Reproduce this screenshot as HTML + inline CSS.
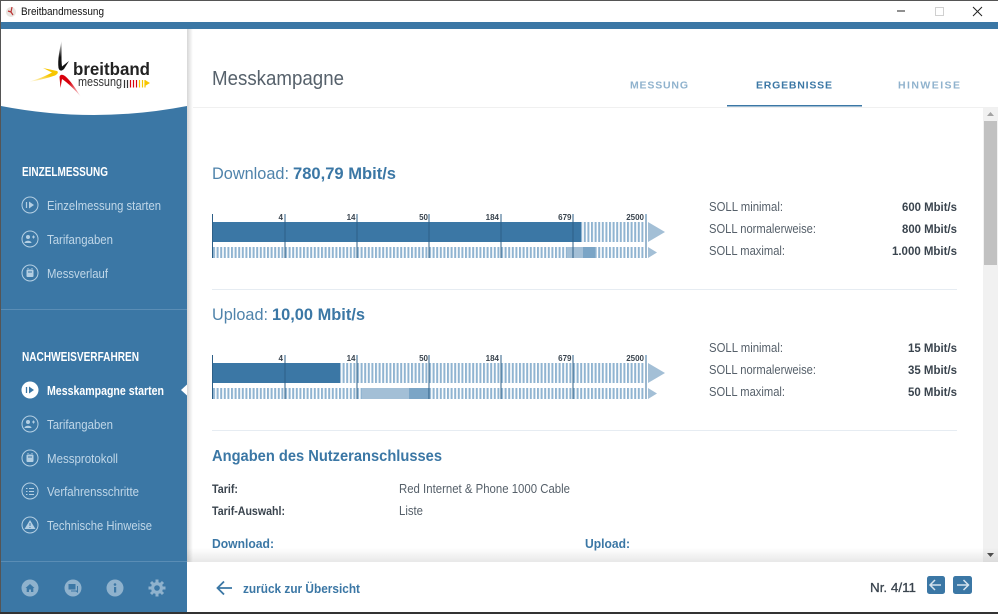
<!DOCTYPE html>
<html><head><meta charset="utf-8"><title>Breitbandmessung</title>
<style>
html,body{margin:0;padding:0;background:#fff;width:998px;height:614px;overflow:hidden}
svg{display:block}
text{font-family:"Liberation Sans",sans-serif}
.b{font-weight:bold}
.nav{font-size:12.5px;fill:#c0d7e8}
.hd{font-size:12.5px;font-weight:bold;fill:#fff}
.soll{font-size:12.5px;fill:#56606a}
.val{font-size:12px;font-weight:bold;fill:#3a444e}
.tk{font-size:8px;font-weight:bold;fill:#3a444e}
.ic{fill:none;stroke:#b4cfe3;stroke-width:1}
</style></head><body>
<svg width="998" height="614" viewBox="0 0 998 614" xmlns="http://www.w3.org/2000/svg">
<defs>
<pattern id="st" x="213" y="0" width="3.6" height="10" patternUnits="userSpaceOnUse"><rect width="2" height="10" fill="#90b4d1"/></pattern>
<linearGradient id="fs" x1="0" y1="0" x2="0" y2="1"><stop offset="0" stop-color="#000" stop-opacity="0"/><stop offset="1" stop-color="#000" stop-opacity=".09"/></linearGradient>
<linearGradient id="ss" x1="0" y1="0" x2="1" y2="0"><stop offset="0" stop-color="#000" stop-opacity=".16"/><stop offset="1" stop-color="#000" stop-opacity="0"/></linearGradient>
<linearGradient id="yl" x1="0" y1="1" x2="1" y2="0"><stop offset="0" stop-color="#f7c600" stop-opacity="0"/><stop offset=".6" stop-color="#f7c600"/><stop offset="1" stop-color="#f7c600"/></linearGradient>
<linearGradient id="rd" x1="1" y1="1" x2="0" y2="0"><stop offset="0" stop-color="#d8000c" stop-opacity="0"/><stop offset=".6" stop-color="#d8000c"/><stop offset="1" stop-color="#d8000c"/></linearGradient>
<linearGradient id="bk" x1="0" y1="0" x2="0" y2="1"><stop offset="0" stop-color="#222" stop-opacity=".1"/><stop offset=".55" stop-color="#111"/><stop offset="1" stop-color="#111"/></linearGradient>
</defs>

<!-- window -->
<rect width="998" height="614" fill="#fff"/>
<rect x="0" y="22" width="998" height="7" fill="#3b77a5"/>
<circle cx="11" cy="12" r="5" fill="#e8e4e0"/><path d="M12 7l-1 5M8 11l3 1M11 12l2 3" stroke="#b33" stroke-width="1.2" fill="none"/>
<text x="21" y="15" font-size="11" fill="#111" textLength="83" lengthAdjust="spacingAndGlyphs">Breitbandmessung</text>
<path d="M897 11h8" stroke="#222" stroke-width="1"/>
<rect x="935.5" y="7.5" width="8" height="8" fill="none" stroke="#d0d0d0"/>
<path d="M973 7l9 9M982 7l-9 9" stroke="#222" stroke-width="1"/>

<!-- sidebar -->
<rect x="1" y="29" width="186" height="585" fill="#3b77a5"/>
<path d="M1 29H187V106Q94 124 1 106Z" fill="#fff"/>
<rect x="187" y="29" width="6" height="533" fill="url(#ss)"/>
<path d="M61.500 41C59.500 50 57.500 60 58.500 68C59.500 71.500 62 71 64 69L69 61L62 66.500C61 58 62 50 61.500 41Z" fill="url(#bk)"/>
<path d="M28 82C38 80.500 48 78 55 75.500C58 74 58.500 72 57 71L43 68L52 72.500C46 76 38 79 28 82Z" fill="url(#yl)"/>
<path d="M81 97C76 89 70 80 65 76C62 74 60 74.500 59.500 77L60.500 88L62 79C68 83 75 90 81 97Z" fill="url(#rd)"/>
<text x="73" y="75" font-size="17.500" font-weight="bold" fill="#222" textLength="77" lengthAdjust="spacingAndGlyphs">breitband</text>
<text x="78" y="86" font-size="13" fill="#333" textLength="44" lengthAdjust="spacingAndGlyphs">messung</text>
<path d="M124.500 80v8M127.500 80v8" stroke="#333" stroke-width="1.200"/>
<path d="M130.500 80v7.500M133.500 80v7.500M136.500 80v7.500" stroke="#d8000c" stroke-width="1.200"/>
<path d="M139.500 80v7.500M142.500 80v7.500M145 80v7.500" stroke="#f7c600" stroke-width="1.200"/>
<path d="M145 80l5 3-5 3z" fill="#f7c600"/>

<text x="22" y="176" class="hd" textLength="86" lengthAdjust="spacingAndGlyphs">EINZELMESSUNG</text>
<circle class="ic" cx="30" cy="205" r="8"/><path d="M26.500 202v6" stroke="#b4cfe3" stroke-width="1.200"/><path d="M29 201.500l5 3.500-5 3.500z" fill="#b4cfe3"/>
<text x="47" y="210" class="nav" textLength="114" lengthAdjust="spacingAndGlyphs">Einzelmessung starten</text>
<circle class="ic" cx="30" cy="239" r="8"/><circle cx="28" cy="237" r="2" fill="#b4cfe3"/><path d="M24.500 243c0-3 7-3 7 0z" fill="#b4cfe3"/><path d="M32 237h3M33.500 235.500v3" stroke="#b4cfe3"/>
<text x="47" y="244" class="nav" textLength="66" lengthAdjust="spacingAndGlyphs">Tarifangaben</text>
<circle class="ic" cx="30" cy="273" r="8"/><rect x="26.500" y="269.500" width="7" height="7.500" rx="1" fill="#b4cfe3"/><path d="M28 272h4" stroke="#3b77a5"/><path d="M28 269v-1M32 269v-1" stroke="#b4cfe3"/>
<text x="47" y="278" class="nav" textLength="61" lengthAdjust="spacingAndGlyphs">Messverlauf</text>

<rect x="1" y="309" width="186" height="1" fill="#5a8db5"/>

<text x="22" y="361" class="hd" textLength="117" lengthAdjust="spacingAndGlyphs">NACHWEISVERFAHREN</text>
<circle cx="30" cy="390" r="8.500" fill="#fff"/><path d="M26.500 387v6" stroke="#3b77a5" stroke-width="1.300"/><path d="M29 386.500l5 3.500-5 3.500z" fill="#3b77a5"/>
<text x="47" y="395" class="nav b" style="fill:#fff" textLength="117" lengthAdjust="spacingAndGlyphs">Messkampagne starten</text>
<path d="M187 384.500v11l-6-5.500z" fill="#fff"/>
<circle class="ic" cx="30" cy="424" r="8"/><circle cx="28" cy="422" r="2" fill="#b4cfe3"/><path d="M24.500 428c0-3 7-3 7 0z" fill="#b4cfe3"/><path d="M32 422h3M33.500 420.500v3" stroke="#b4cfe3"/>
<text x="47" y="429" class="nav" textLength="66" lengthAdjust="spacingAndGlyphs">Tarifangaben</text>
<circle class="ic" cx="30" cy="458" r="8"/><rect x="26.500" y="454.500" width="7" height="7.500" rx="1" fill="#b4cfe3"/><path d="M28 457h4" stroke="#3b77a5"/><path d="M28 454v-1M32 454v-1" stroke="#b4cfe3"/>
<text x="47" y="463" class="nav" textLength="71" lengthAdjust="spacingAndGlyphs">Messprotokoll</text>
<circle class="ic" cx="30" cy="491" r="8"/><path d="M29 488.500h5M29 491.500h5M29 494.500h5M26 488.500h1.500M26 491.500h1.500M26 494.500h1.500" stroke="#b4cfe3" stroke-width="1.100"/>
<text x="47" y="496" class="nav" textLength="92" lengthAdjust="spacingAndGlyphs">Verfahrensschritte</text>
<circle class="ic" cx="30" cy="525" r="8"/><path d="M30 520l5.500 9h-11z" fill="#b4cfe3"/><path d="M30 523v3M30 527v1" stroke="#3b77a5"/>
<text x="47" y="530" class="nav" textLength="105" lengthAdjust="spacingAndGlyphs">Technische Hinweise</text>

<rect x="1" y="561" width="186" height="1" fill="#5a8db5"/>
<circle cx="30" cy="588" r="8.500" fill="#8fb2cd"/><path d="M25.500 588l4.500-4 4.500 4h-1.200v4h-2.300v-2.500h-2v2.500h-2.300v-4z" fill="#3b77a5"/>
<circle cx="73" cy="588" r="8.500" fill="#8fb2cd"/><rect x="68.500" y="584" width="7" height="5.500" fill="#3b77a5"/><path d="M71 590.500h6v-4.500h1v7l-2-1.500h-5z" fill="#3b77a5"/>
<circle cx="115" cy="588" r="8.500" fill="#8fb2cd"/><rect x="114" y="587" width="2.200" height="5.500" fill="#3b77a5"/><circle cx="115" cy="584.500" r="1.300" fill="#3b77a5"/>
<circle cx="157" cy="588" r="6" fill="#8fb2cd"/><path d="M157 579.500v17M148.500 588h17M151 582l12 12M163 582l-12 12" stroke="#8fb2cd" stroke-width="3"/><circle cx="157" cy="588" r="2.800" fill="#3b77a5"/>

<!-- header -->
<text x="212" y="85" font-size="20" fill="#56616b" textLength="132" lengthAdjust="spacingAndGlyphs">Messkampagne</text>
<text x="630" y="88.500" font-size="10.500" font-weight="bold" fill="#8fb2cd" textLength="58" lengthAdjust="spacing">MESSUNG</text>
<text x="756" y="88.500" font-size="10.500" font-weight="bold" fill="#3b77a5" textLength="76" lengthAdjust="spacing">ERGEBNISSE</text>
<text x="898" y="88.500" font-size="10.500" font-weight="bold" fill="#8fb2cd" textLength="62" lengthAdjust="spacing">HINWEISE</text>
<rect x="193" y="107" width="805" height="1" fill="#f0f0f0"/>
<rect x="727" y="105" width="135" height="1.500" fill="#3b77a5"/>

<!-- Download -->
<text x="212" y="179" font-size="17" fill="#4f83ab" textLength="77" lengthAdjust="spacingAndGlyphs">Download:</text>
<text x="293" y="179" font-size="17" font-weight="bold" fill="#3b77a5" textLength="103" lengthAdjust="spacingAndGlyphs">780,79 Mbit/s</text>

<rect x="581" y="222" width="64" height="20" fill="url(#st)"/>
<rect x="213" y="247" width="432" height="11" fill="url(#st)"/>
<rect x="212" y="222" width="369" height="20" fill="#3b77a5"/>
<rect x="567" y="247" width="16" height="11" fill="#a3bfd6"/>
<rect x="583" y="247" width="12" height="11" fill="#7ba5c6"/>
<path d="M648 222l17 10-17 10z" fill="#a3bfd6"/><path d="M648 247l9 5.500-9 5.500z" fill="#a3bfd6"/>
<path d="M212.500 214v44M285 214v44M357 214v44M429 214v44M501 214v44M573 214v44" stroke="#2d5f87" stroke-width="1"/>
<path d="M646 214v44" stroke="#7ba0bf" stroke-width="1.500"/>
<text x="283" y="220" class="tk" text-anchor="end">4</text>
<text x="355.500" y="220" class="tk" text-anchor="end">14</text>
<text x="428" y="220" class="tk" text-anchor="end">50</text>
<text x="499" y="220" class="tk" text-anchor="end">184</text>
<text x="571.500" y="220" class="tk" text-anchor="end">679</text>
<text x="644" y="220" class="tk" text-anchor="end">2500</text>

<text x="709" y="211" class="soll" textLength="74" lengthAdjust="spacingAndGlyphs">SOLL minimal:</text>
<text x="709" y="233" class="soll" textLength="107" lengthAdjust="spacingAndGlyphs">SOLL normalerweise:</text>
<text x="709" y="255" class="soll" textLength="76" lengthAdjust="spacingAndGlyphs">SOLL maximal:</text>
<text x="902" y="211" class="val" textLength="55" lengthAdjust="spacingAndGlyphs">600 Mbit/s</text>
<text x="902" y="233" class="val" textLength="55" lengthAdjust="spacingAndGlyphs">800 Mbit/s</text>
<text x="892" y="255" class="val" textLength="65" lengthAdjust="spacingAndGlyphs">1.000 Mbit/s</text>

<rect x="212" y="289" width="745" height="1" fill="#e6ecf2"/>

<!-- Upload -->
<text x="212" y="320" font-size="17" fill="#4f83ab" textLength="56" lengthAdjust="spacingAndGlyphs">Upload:</text>
<text x="272" y="320" font-size="17" font-weight="bold" fill="#3b77a5" textLength="93" lengthAdjust="spacingAndGlyphs">10,00 Mbit/s</text>

<rect x="340" y="363" width="305" height="20" fill="url(#st)"/>
<rect x="213" y="388" width="432" height="11" fill="url(#st)"/>
<rect x="212" y="363" width="128" height="20" fill="#3b77a5"/>
<rect x="362" y="388" width="47" height="11" fill="#a3bfd6"/>
<rect x="409" y="388" width="20" height="11" fill="#7ba5c6"/>
<path d="M648 363l17 10-17 10z" fill="#a3bfd6"/><path d="M648 388l9 5.500-9 5.500z" fill="#a3bfd6"/>
<path d="M212.500 355v44M285 355v44M357 355v44M429 355v44M501 355v44M573 355v44" stroke="#2d5f87" stroke-width="1"/>
<path d="M646 355v44" stroke="#7ba0bf" stroke-width="1.500"/>
<text x="283" y="361" class="tk" text-anchor="end">4</text>
<text x="355.500" y="361" class="tk" text-anchor="end">14</text>
<text x="428" y="361" class="tk" text-anchor="end">50</text>
<text x="499" y="361" class="tk" text-anchor="end">184</text>
<text x="571.500" y="361" class="tk" text-anchor="end">679</text>
<text x="644" y="361" class="tk" text-anchor="end">2500</text>

<text x="709" y="352" class="soll" textLength="74" lengthAdjust="spacingAndGlyphs">SOLL minimal:</text>
<text x="709" y="374" class="soll" textLength="107" lengthAdjust="spacingAndGlyphs">SOLL normalerweise:</text>
<text x="709" y="396" class="soll" textLength="76" lengthAdjust="spacingAndGlyphs">SOLL maximal:</text>
<text x="908" y="352" class="val" textLength="49" lengthAdjust="spacingAndGlyphs">15 Mbit/s</text>
<text x="908" y="374" class="val" textLength="49" lengthAdjust="spacingAndGlyphs">35 Mbit/s</text>
<text x="908" y="396" class="val" textLength="49" lengthAdjust="spacingAndGlyphs">50 Mbit/s</text>

<rect x="212" y="430" width="745" height="1" fill="#e6ecf2"/>

<!-- Angaben -->
<text x="212" y="461" font-size="16" font-weight="bold" fill="#3b77a5" textLength="230" lengthAdjust="spacingAndGlyphs">Angaben des Nutzeranschlusses</text>
<text x="212" y="493" font-size="12" font-weight="bold" fill="#3a444e" textLength="26" lengthAdjust="spacingAndGlyphs">Tarif:</text>
<text x="399" y="493" font-size="12.500" fill="#56606a" textLength="171" lengthAdjust="spacingAndGlyphs">Red Internet &amp; Phone 1000 Cable</text>
<text x="212" y="515" font-size="12" font-weight="bold" fill="#3a444e" textLength="73" lengthAdjust="spacingAndGlyphs">Tarif-Auswahl:</text>
<text x="399" y="515" font-size="12.500" fill="#56606a" textLength="24" lengthAdjust="spacingAndGlyphs">Liste</text>
<text x="212" y="548" font-size="13" font-weight="bold" fill="#3b77a5" textLength="62" lengthAdjust="spacingAndGlyphs">Download:</text>
<text x="585" y="548" font-size="13" font-weight="bold" fill="#3b77a5" textLength="45" lengthAdjust="spacingAndGlyphs">Upload:</text>

<!-- scrollbar -->
<rect x="983" y="108" width="15" height="454" fill="#f1f1f1"/>
<rect x="984" y="121" width="13" height="144" fill="#c1c1c1"/>
<path d="M987 116l3.500-4 3.500 4z" fill="#a3a3a3"/>
<path d="M987 553h7l-3.500 4z" fill="#505050"/>

<!-- footer shadow -->
<rect x="187" y="548" width="811" height="14" fill="url(#fs)"/>
<rect x="187" y="562" width="811" height="50" fill="#fff"/>

<!-- footer -->
<path d="M232 588h-14M224 581.500l-6.500 6.500 6.500 6.500" fill="none" stroke="#3b77a5" stroke-width="1.800"/>
<text x="243" y="593" font-size="13" font-weight="bold" fill="#3b77a5" textLength="117" lengthAdjust="spacingAndGlyphs">zurück zur Übersicht</text>
<text x="870" y="592" font-size="13" fill="#3a444e" stroke="#3a444e" stroke-width=".3" textLength="46" lengthAdjust="spacingAndGlyphs">Nr. 4/11</text>
<rect x="927" y="576" width="18" height="18" rx="2.500" fill="#3b77a5"/>
<path d="M941 585h-10.500M935 580l-5 5 5 5" fill="none" stroke="#d5e3ee" stroke-width="1.500"/>
<rect x="953" y="576" width="19" height="18" rx="2.500" fill="#3b77a5"/>
<path d="M957 585h11M963.500 580l5 5-5 5" fill="none" stroke="#d5e3ee" stroke-width="1.500"/>

<!-- window border -->
<rect x="0" y="0" width="998" height="1" fill="#555"/>
<rect x="0" y="0" width="1" height="614" fill="#555"/>
<rect x="0" y="612" width="998" height="2" fill="#333"/>
</svg>
</body></html>
